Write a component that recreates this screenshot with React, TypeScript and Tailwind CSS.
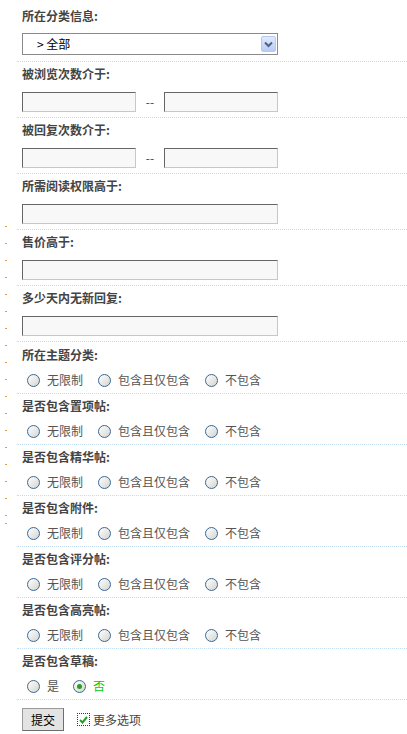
import React from "react";

const font = { fontFamily: '"Noto Sans CJK SC", "Liberation Sans", sans-serif' };

const radioGroups = [
  "所在主题分类:",
  "是否包含置项帖:",
  "是否包含精华帖:",
  "是否包含附件:",
  "是否包含评分帖:",
  "是否包含高亮帖:",
];

function Radio({ checked = false }: { checked?: boolean }) {
  return (
    <span className="w-[13px] h-[13px] shrink-0 rounded-full border border-[#3b6894] bg-gradient-to-br from-white to-[#d4d4d0] flex items-center justify-center">
      {checked && <span className="w-[5px] h-[5px] rounded-full bg-[#21a121]" />}
    </span>
  );
}

function TextInput({ width }: { width: string }) {
  return (
    <div
      className={`${width} h-[20px] bg-[#f8f8f8] border-t border-l border-[#666] border-b border-r border-b-[#c8c8c8] border-r-[#c8c8c8]`}
    />
  );
}

function Label({ children }: { children: React.ReactNode }) {
  return <div className="h-[14px] leading-[14px] text-[12px] font-bold text-[#444]">{children}</div>;
}

function InputBlock({ label, pair = false }: { label: string; pair?: boolean }) {
  return (
    <div className="pl-[5px] pt-[5px] pb-[5px] border-b border-dotted border-[#c9d9e8]">
      <Label>{label}</Label>
      <div className="mt-[11px] flex items-center">
        {pair ? (
          <>
            <TextInput width="w-[114px]" />
            <span className="w-[28px] text-center text-[12px] text-[#444] leading-[20px]">--</span>
            <TextInput width="w-[114px]" />
          </>
        ) : (
          <TextInput width="w-[256px]" />
        )}
      </div>
    </div>
  );
}

function RadioBlock({ label, first = false }: { label: string; first?: boolean }) {
  const opts = ["无限制", "包含且仅包含", "不包含"];
  return (
    <div className={`pl-[5px] ${first ? "pt-[6px]" : "pt-[5px]"} pb-[5px] border-b border-dotted border-[#c2dcf2]`}>
      <Label>{label}</Label>
      <div className="mt-[10px] h-[16px] pl-[5px] flex items-center gap-[15px]">
        {opts.map((o) => (
          <label key={o} className="flex items-center gap-[7px] text-[12px] text-[#555] leading-[16px]">
            <Radio />
            <span>{o}</span>
          </label>
        ))}
      </div>
    </div>
  );
}

export default function App() {
  return (
    <div className="relative w-[407px] h-[734px] bg-white overflow-hidden" style={font}>
      {/* left edge marks */}
      <div className="absolute left-[5px] top-[226px] flex flex-col gap-[16px]">
        {[...Array(18)].map((_, i) => (
          <span key={i} className="block w-[2px] h-[1px] bg-[#e69a2e]" />
        ))}
      </div>
      <span className="absolute left-[5px] top-[523px] block w-[2px] h-[1px] bg-[#e69a2e]" />

      <div className="ml-[17px]">
        {/* category select */}
        <div className="pl-[5px] pt-[9px] pb-[6px] border-b border-dotted border-[#c9d9e8]">
          <Label>所在分类信息:</Label>
          <div className="mt-[10px] w-[256px] h-[22px] border border-[#8a8a8a] bg-white flex items-center justify-between pr-[1px]">
            <span className="pl-[14px] text-[12px] text-black leading-[20px]">&gt; 全部</span>
            <span className="w-[15px] h-[16px] rounded-[2px] bg-gradient-to-b from-[#e1eafe] to-[#b7cbf7] border border-[#b6c9f2] flex items-center justify-center">
              <svg width="9" height="7" viewBox="0 0 9 7">
                <path d="M1 1.5 L4.5 5 L8 1.5" fill="none" stroke="#4d6185" strokeWidth="2" />
              </svg>
            </span>
          </div>
        </div>

        <InputBlock label="被浏览次数介于:" pair />
        <InputBlock label="被回复次数介于:" pair />
        <InputBlock label="所需阅读权限高于:" />
        <InputBlock label="售价高于:" />
        <InputBlock label="多少天内无新回复:" />

        {radioGroups.map((g, i) => (
          <RadioBlock key={g} label={g} first={i === 0} />
        ))}

        {/* drafts */}
        <div className="pl-[5px] pt-[5px] pb-[5px] border-b border-dotted border-[#c2dcf2]">
          <Label>是否包含草稿:</Label>
          <div className="mt-[10px] h-[16px] pl-[5px] flex items-center gap-[14px]">
            <label className="flex items-center gap-[7px] text-[12px] text-[#555] leading-[16px]">
              <Radio />
              <span>是</span>
            </label>
            <label className="flex items-center gap-[7px] text-[12px] text-[#00cc00] leading-[16px]">
              <Radio checked />
              <span>否</span>
            </label>
          </div>
        </div>

        {/* submit */}
        <div className="pl-[5px] pt-[8px] flex items-center">
          <button className="w-[42px] h-[23px] bg-[#e3e3e3] border border-[#9a9a9a] border-b-[#6e6e6e] border-r-[#6e6e6e] text-[12px] text-black leading-[20px]">
            提交
          </button>
          <label className="ml-[13px] flex items-center gap-[3px] text-[12px] text-[#444]">
            <span className="w-[13px] h-[13px] border border-dotted border-[#1c3c6a] bg-white flex items-center justify-center">
              <svg width="9" height="8" viewBox="0 0 9 8">
                <path d="M1 4 L3.5 6.5 L8 1" fill="none" stroke="#21a121" strokeWidth="2" />
              </svg>
            </span>
            <span>更多选项</span>
          </label>
        </div>
      </div>
    </div>
  );
}
